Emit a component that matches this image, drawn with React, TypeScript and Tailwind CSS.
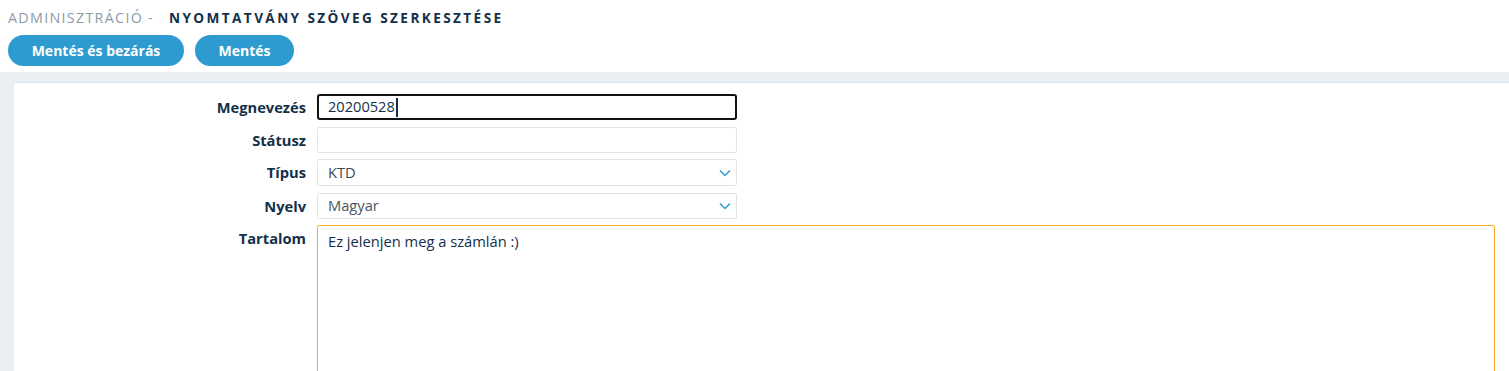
import React from "react";

const Chevron = () => (
  <svg width="12" height="8" viewBox="0 0 12 8" fill="none" className="absolute right-[5px] top-1/2 -translate-y-1/2">
    <path d="M1 1.5 L6 6.5 L11 1.5" stroke="#2e9bd0" strokeWidth="1.5" />
  </svg>
);

export default function App() {
  return (
    <div className="w-[1509px] h-[371px] overflow-hidden bg-white font-['Open_Sans',sans-serif] flex flex-col">
      <div className="px-2 pt-[8px] pb-[6px]">
        <div className="flex items-center h-[20px] leading-[20px]">
          <span className="text-[#8d9aa6] tracking-[1.3px] text-[14.3px]">ADMINISZTRÁCIÓ -</span>
          <span className="ml-[15px] text-[#13304a] font-bold tracking-[2.4px] text-[13.6px]">NYOMTATVÁNY SZÖVEG SZERKESZTÉSE</span>
        </div>
        <div className="flex gap-[11px] mt-[7px]">
          <button className="h-[31px] w-[176px] rounded-full bg-[#2e9bd0] text-white font-bold text-[14px]">Mentés és bezárás</button>
          <button className="h-[31px] w-[99px] rounded-full bg-[#2e9bd0] text-white font-bold text-[14px]">Mentés</button>
        </div>
      </div>
      <div className="flex-1 bg-[#e9eef2] pt-[10px] pl-[14px] flex">
        <div className="flex-1 bg-white border-t border-[#dde4ea] pt-[11px] pr-[14px]">
          <div className="grid grid-cols-[292px_1fr] gap-x-[11px] gap-y-[6.5px] text-[14.7px] text-[#13304a]">
            <div className="font-bold text-right leading-[26px]">Megnevezés</div>
            <div className="w-[420px] h-[26px] border-2 border-[#111] rounded-[3px] flex items-center px-[9px] text-[14.6px]">
              <span>20200528</span>
              <span className="w-[2px] h-[19px] bg-[#13304a] ml-[1px]" />
            </div>
            <div className="font-bold text-right leading-[26px]">Státusz</div>
            <div className="w-[420px] h-[26px] border border-[#dfe5ea] rounded-[2px]" />
            <div className="font-bold text-right leading-[26px]">Típus</div>
            <div className="relative w-[420px] h-[27px] border border-[#dfe5ea] rounded-[2px] flex items-center px-[10px] text-[#3d4a56]">
              KTD
              <Chevron />
            </div>
            <div className="font-bold text-right leading-[26px]">Nyelv</div>
            <div className="relative w-[420px] h-[26px] border border-[#dfe5ea] rounded-[2px] flex items-center px-[10px] text-[#4a5661]">
              Magyar
              <Chevron />
            </div>
            <div className="font-bold text-right leading-[26px]">Tartalom</div>
            <div className="h-[200px] border border-[#f5ae2a] rounded-[2px] px-[10px] pt-[4px] text-[#13304a]">
              Ez jelenjen meg a számlán :)
            </div>
          </div>
        </div>
      </div>
    </div>
  );
}
